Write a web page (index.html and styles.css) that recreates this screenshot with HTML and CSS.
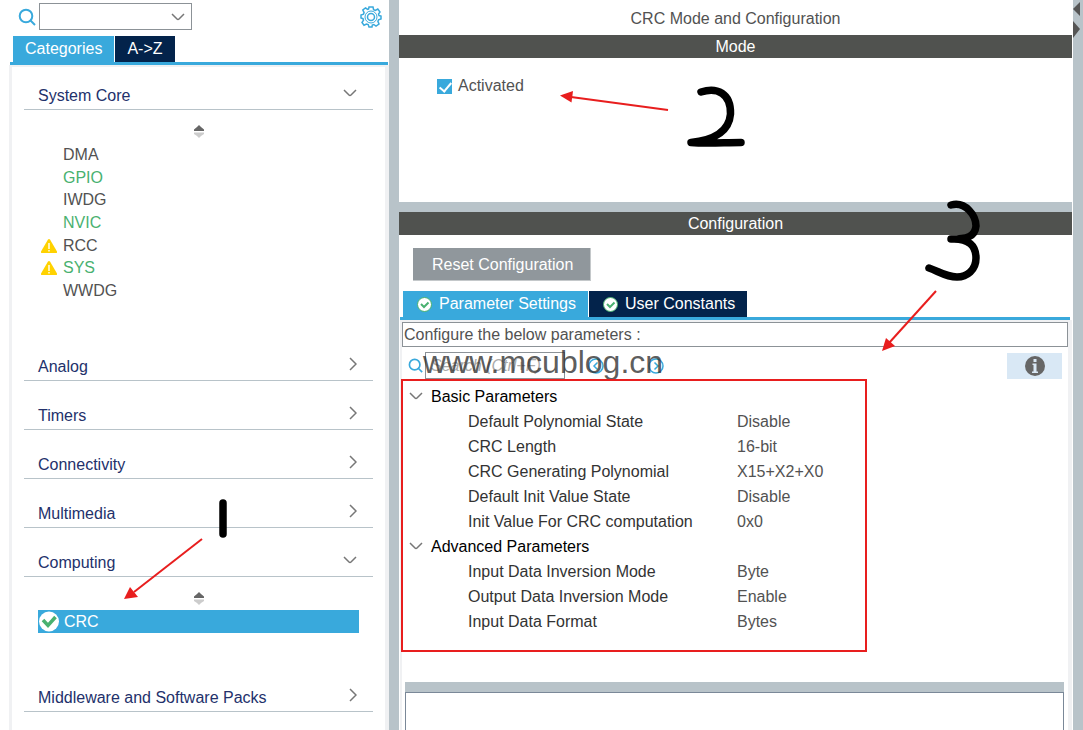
FILE: index.html
```html
<!DOCTYPE html>
<html lang="en">
<head>
  <meta charset="UTF-8">
  <title>CRC Mode and Configuration</title>
  <link rel="stylesheet" href="styles.css">
</head>
<body>
  <!-- shared icons -->
  <svg class="icon-defs" width="0" height="0" aria-hidden="true">
    <symbol id="chevron-down" viewBox="0 0 14 8"><path d="M1 1l5 5q1 1 2 0l5-5" /></symbol>
    <symbol id="chevron-right" viewBox="0 0 8 14"><path d="M1 1l6 6-6 6" /></symbol>
    <symbol id="search" viewBox="0 0 18 18"><circle cx="8" cy="8" r="6.3" /><path d="M12 12l5 5" /></symbol>
    <symbol id="sorter" viewBox="0 0 10 13">
      <path fill="#666" d="M0 6V4.500L3 2l2-2 2 2 3 2.500V6z" />
      <path fill="#ccc" d="M0 7.500h10V9L7 11l-2 2-2-2-3-2z" />
    </symbol>
    <symbol id="warning" viewBox="0 0 16 14">
      <path fill="#ffd200" d="M7 .6q1-1.200 2 0l7 12q.3 1.400-1 1.400H1q-1.300 0-1-1.400z" />
      <path fill="#fff" d="M7.300 4h1.400v6H7.300zM7.300 11h1.400v1.500H7.300z" />
    </symbol>
    <symbol id="check-circle" viewBox="0 0 15 15">
      <circle cx="7.500" cy="7.500" r="7" fill="#fff" stroke="#49b170" />
      <path d="M4 7l3 3 4.500-4.500" fill="none" stroke="#49b170" stroke-width="2" />
    </symbol>
  </svg>

  <div class="app">
    <aside class="sidebar">
      <div class="sidebar-tools">
        <svg class="line-icon blue search-icon"><use href="#search" /></svg>
        <div class="combo">
          <select aria-label="Search peripheral"><option></option></select>
          <svg class="line-icon chevron-down"><use href="#chevron-down" /></svg>
        </div>
        <button class="icon-button gear" aria-label="Settings">
          <svg width="22" height="22" viewBox="0 0 22 22" fill="none" stroke="#39a9dc" stroke-width="1.500">
            <path d="M9 1h4l.6 2.700 1.800.8L17.800 3 20 6l-1.500 2.200.5 1.300L21 10v3l-2.500.8-.6 1.600L19 18l-3 2-2.200-1.500-1.500.5L12 21h-3l-.8-2.400-1.700-.6L4 19.200 2 16.500l1.500-2.300-.5-1.500L1 12V9l2.500-.8.6-1.600L2.800 4 5.500 2l2.300 1.500.8-.4z" />
            <circle cx="11" cy="11" r="6" stroke-width="1" />
            <circle cx="11" cy="11" r="3.500" />
          </svg>
        </button>
      </div>
      <div class="tabs sidebar-tabs">
        <button class="tab active">Categories</button>
        <button class="tab">A-&gt;Z</button>
      </div>
      <div class="categories">
        <section class="category">
          <button class="category-header">System Core <svg class="line-icon chevron-down"><use href="#chevron-down" /></svg></button>
          <div class="category-body">
            <svg class="sorter"><use href="#sorter" /></svg>
            <ul class="device-list core-list">
              <li>DMA</li>
              <li class="enabled">GPIO</li>
              <li>IWDG</li>
              <li class="enabled">NVIC</li>
              <li><svg class="warning"><use href="#warning" /></svg>RCC</li>
              <li class="enabled"><svg class="warning"><use href="#warning" /></svg>SYS</li>
              <li>WWDG</li>
            </ul>
          </div>
        </section>
        <section class="category">
          <button class="category-header">Analog <svg class="line-icon chevron-right"><use href="#chevron-right" /></svg></button>
        </section>
        <section class="category">
          <button class="category-header">Timers <svg class="line-icon chevron-right"><use href="#chevron-right" /></svg></button>
        </section>
        <section class="category">
          <button class="category-header">Connectivity <svg class="line-icon chevron-right"><use href="#chevron-right" /></svg></button>
        </section>
        <section class="category">
          <button class="category-header">Multimedia <svg class="line-icon chevron-right"><use href="#chevron-right" /></svg></button>
        </section>
        <section class="category">
          <button class="category-header">Computing <svg class="line-icon chevron-down"><use href="#chevron-down" /></svg></button>
          <div class="category-body">
            <svg class="sorter"><use href="#sorter" /></svg>
            <ul class="device-list">
              <li class="selected">
                <svg width="20" height="21" viewBox="0 0 20 21">
                  <circle cx="10" cy="10.500" r="10" fill="#fff" />
                  <path d="M4 9l5 5.500L16.500 6" fill="none" stroke="#49b170" stroke-width="3.500" />
                </svg>
                CRC
              </li>
            </ul>
          </div>
        </section>
        <section class="category">
          <button class="category-header">Middleware and Software Packs <svg class="line-icon chevron-right"><use href="#chevron-right" /></svg></button>
        </section>
      </div>
    </aside>

    <div class="splitter"></div>

    <main class="main">
      <h1 class="title">CRC Mode and Configuration</h1>
      <h2 class="bar">Mode</h2>
      <section class="mode">
        <label class="check"><input type="checkbox" checked> Activated</label>
      </section>
      <div class="divider"></div>
      <h2 class="bar">Configuration</h2>
      <section class="config">
        <button class="reset">Reset Configuration</button>
        <div class="tabs config-tabs">
          <button class="tab active"><svg class="tab-icon"><use href="#check-circle" /></svg>Parameter Settings</button>
          <button class="tab"><svg class="tab-icon"><use href="#check-circle" /></svg>User Constants</button>
        </div>
        <div class="params">
          <p class="hint">Configure the below parameters :</p>
          <div class="param-tools">
            <svg class="line-icon blue search-small"><use href="#search" /></svg>
            <input class="param-search" type="text" placeholder="Search (Ctrl+F)" aria-label="Search parameter">
            <button class="icon-button prev" aria-label="Previous">
              <svg width="16" height="16" viewBox="0 0 16 16" fill="none" stroke="#39a9dc" stroke-width="1.500"><circle cx="8" cy="8" r="7" /><path d="M9.500 4.500L6 8l3.500 3.500" /></svg>
            </button>
            <button class="icon-button next" aria-label="Next">
              <svg width="16" height="16" viewBox="0 0 16 16" fill="none" stroke="#39a9dc" stroke-width="1.500"><circle cx="8" cy="8" r="7" /><path d="M6.500 4.500L10 8l-3.500 3.500" /></svg>
            </button>
            <button class="info" aria-label="Information">
              <svg width="20" height="20" viewBox="0 0 20 20">
                <circle cx="10" cy="10" r="10" fill="#666" />
                <path fill="#d9e8f5" d="M8.500 3h3v3h-3zM7.500 7.500h4v8h1.500V17h-6v-1.500h1.500V9h-1z" />
              </svg>
            </button>
          </div>
          <table class="param-table">
            <colgroup><col class="col-name"><col></colgroup>
            <tbody>
              <tr class="group"><th colspan="2"><svg class="line-icon chevron-down"><use href="#chevron-down" /></svg>Basic Parameters</th></tr>
              <tr><td>Default Polynomial State</td><td>Disable</td></tr>
              <tr><td>CRC Length</td><td>16-bit</td></tr>
              <tr><td>CRC Generating Polynomial</td><td>X15+X2+X0</td></tr>
              <tr><td>Default Init Value State</td><td>Disable</td></tr>
              <tr><td>Init Value For CRC computation</td><td>0x0</td></tr>
            </tbody>
            <tbody>
              <tr class="group"><th colspan="2"><svg class="line-icon chevron-down"><use href="#chevron-down" /></svg>Advanced Parameters</th></tr>
              <tr><td>Input Data Inversion Mode</td><td>Byte</td></tr>
              <tr><td>Output Data Inversion Mode</td><td>Enable</td></tr>
              <tr><td>Input Data Format</td><td>Bytes</td></tr>
            </tbody>
          </table>
          <div class="divider description-divider"></div>
          <div class="description"></div>
        </div>
      </section>
    </main>

    <div class="splitter right">
      <svg width="9" height="40" viewBox="0 0 9 40" fill="#555"><path d="M7 2v14L0 9z" /><path d="M0 21l7 8-7 9z" /></svg>
    </div>
  </div>

  <!-- tutorial marks drawn over the window -->
  <div class="watermark">www.mcublog.cn</div>
  <svg class="marks" width="1083" height="730" viewBox="0 0 1083 730" aria-hidden="true">
    <g fill="none" stroke="#e81e1e" stroke-width="2">
      <rect x="402" y="380" width="464" height="271" />
      <path d="M202 539L134 592" />
      <path d="M668 110L571 97" />
      <path d="M936 291L889 343" />
    </g>
    <g fill="#e81e1e">
      <path d="M124 599l6-12 8 10z" />
      <path d="M560 95.500l13-4.500-1.500 11.500z" />
      <path d="M882 351l4-13 9 8z" />
    </g>
    <g fill="none" stroke="#000" stroke-width="7.500" stroke-linecap="round" stroke-linejoin="round">
      <path d="M223 503v31" />
      <path d="M701 92C717 87 731 93 730.500 114C729 132 714 140 691 142.500C707 144 724 142.500 741 142.500" />
      <path d="M951 205C966 201 976 216 976 226C975 237 967 239 951 239C969 238 976 246 976 258C976 270 967 277 957 277C946 277 938 271 929 268" />
    </g>
  </svg>
</body>
</html>
```

FILE: styles.css
```css
* { box-sizing: border-box; }
body {
  margin: 0;
  font-family: "Liberation Sans", Arial, sans-serif;
  font-size: 16px;
  line-height: 20px;
  color: #525252;
  background: #fff;
  overflow: hidden;
}
button, input, select { font: inherit; color: inherit; }
button { border: none; background: none; padding: 0; cursor: pointer; }
h1, h2, p, ul { margin: 0; padding: 0; font-size: 16px; font-weight: normal; }
svg { flex: none; display: block; }

.icon-defs { position: absolute; }
.line-icon { fill: none; stroke: #777; stroke-width: 1.5; }
.line-icon.blue { stroke: #39a9dc; stroke-width: 2; }
.chevron-down { width: 14px; height: 8px; }
.chevron-right { width: 8px; height: 14px; }

.app { display: flex; height: 100vh; }
.splitter { flex: none; width: 10px; background: #b8c3c9; }

/* left side */
.sidebar {
  flex: none;
  width: 389px;
  display: flex;
  flex-direction: column;
}
.sidebar-tools {
  display: flex;
  align-items: flex-start;
  height: 36px;
  padding: 3px 7px 0 18px;
}
.search-icon { width: 18px; height: 18px; margin: 5px 3px 0 0; }
.combo { position: relative; width: 153px; height: 27px; }
.combo select {
  width: 100%;
  height: 100%;
  border: 1px solid #8c9297;
  border-radius: 0;
  background: #fff;
  appearance: none;
}
.combo svg { position: absolute; right: 7px; top: 10px; pointer-events: none; }
.gear { margin: 3px 0 0 auto; }

.tabs { display: flex; gap: 1px; border-bottom: 3px solid #39a9dc; }
.tab {
  display: flex;
  align-items: center;
  height: 26px;
  padding: 0 12px;
  color: #fff;
  background: #03234b;
}
.tab.active { background: #39a9dc; }
.tab-icon { width: 15px; height: 15px; margin-right: 7px; }
.sidebar-tabs { margin: 0 1px 0 10px; padding-left: 3px; }

.categories {
  flex: 1;
  margin-left: 9px;
  padding: 0 12px;
  border: solid #f0f1f3;
  border-width: 2px 4px 0 3px;
}
.category-header {
  display: flex;
  align-items: center;
  justify-content: space-between;
  width: 100%;
  padding: 25px 16px 3px 14px;
  border-bottom: 1px solid #b8c3c9;
  color: #23316b;
}
.category:first-child .category-header { padding-top: 19px; }
.category-header svg { margin-bottom: 6px; }
.category-body { padding: 15px 14px 30px; }
.sorter { width: 10px; height: 13px; margin: 0 auto 5px; }
.device-list { list-style: none; }
.device-list li {
  position: relative;
  display: flex;
  align-items: center;
  padding-left: 25px;
}
.core-list { display: grid; height: 159px; padding-top: 1px; }
.device-list .enabled { color: #49b170; }
.warning { position: absolute; left: 3px; width: 16px; height: 14px; }
.device-list .selected {
  height: 23px;
  padding-left: 1px;
  gap: 5px;
  color: #fff;
  background: #39a9dc;
}

/* right side */
.main {
  flex: 1;
  display: flex;
  flex-direction: column;
  min-width: 0;
  padding-right: 1px;
}
.title { padding: 9px 0 6px; text-align: center; }
.bar {
  flex: none;
  padding: 2px 0 1px;
  color: #fff;
  background: #50524f;
  text-align: center;
}
.mode { flex: none; height: 144px; padding: 18px 38px; }
.check { display: inline-flex; align-items: center; gap: 6px; }
.check input {
  position: relative;
  width: 15px;
  height: 15px;
  margin: 0;
  appearance: none;
  background: #39a9dc;
}
.check input:checked::after {
  content: "";
  position: absolute;
  left: 5px;
  top: 1px;
  width: 5px;
  height: 10px;
  border: solid #fff;
  border-width: 0 2px 2px 0;
  transform: rotate(40deg);
}
.divider { flex: none; height: 10px; background: #b8c3c9; }

.config { flex: 1; display: flex; flex-direction: column; min-height: 0; }
.reset {
  flex: none;
  align-self: flex-start;
  height: 33px;
  margin: 13px 14px 10px;
  padding: 2px 17px 0 19px;
  color: #fff;
  background: #90979c;
  border: solid #c4c8ca;
  border-width: 0 1px 1px 0;
}
.config-tabs { flex: none; margin: 0 2px 0 1px; padding-left: 3px; }
.config-tabs .tab { padding: 0 12px 0 14px; }
.params {
  flex: 1;
  display: flex;
  flex-direction: column;
  min-height: 0;
  margin-left: 1px;
  border: solid #f0f1f3;
  border-width: 2px 4px 0 2px;
}
.hint { flex: none; padding: 2px 1px; border: 1px solid #8c9297; height: 25px; }
.param-tools {
  flex: none;
  display: flex;
  align-items: center;
  height: 37px;
  padding: 0 6px;
}
.search-small { width: 15px; height: 15px; margin-right: 2px; }
.param-search {
  width: 140px;
  height: 27px;
  padding: 0 5px;
  border: 1px solid #8c9297;
  background: #fff;
}
.param-search::placeholder { color: #aaa; font-style: italic; }
.prev { margin-left: 23px; }
.next { margin-left: 44px; }
.info {
  display: flex;
  align-items: center;
  justify-content: center;
  width: 55px;
  height: 26px;
  margin-left: auto;
  background: #d9e8f5;
}
.param-table { border-collapse: collapse; width: 100%; table-layout: fixed; }
.col-name { width: 335px; }
.param-table tr { height: 25px; }
.param-table td, .param-table th { padding: 0; text-align: left; font-weight: normal; }
.param-table td:first-child { padding-left: 66px; color: #333; }
.param-table th { color: #000; padding-left: 29px; position: relative; }
.param-table th svg { position: absolute; left: 7px; top: 8px; }
.description-divider { margin: 48px 4px 0 3px; }
.description {
  flex: 1;
  margin: 0 4px 0 3px;
  border: solid #7a8898;
  border-width: 1px 1px 0;
}

/* overlay */
.watermark {
  position: absolute;
  left: 423px;
  top: 344px;
  font-size: 32px;
  line-height: 36px;
  color: rgba(50, 50, 50, 0.8);
}
.marks { position: absolute; left: 0; top: 0; pointer-events: none; }
```
